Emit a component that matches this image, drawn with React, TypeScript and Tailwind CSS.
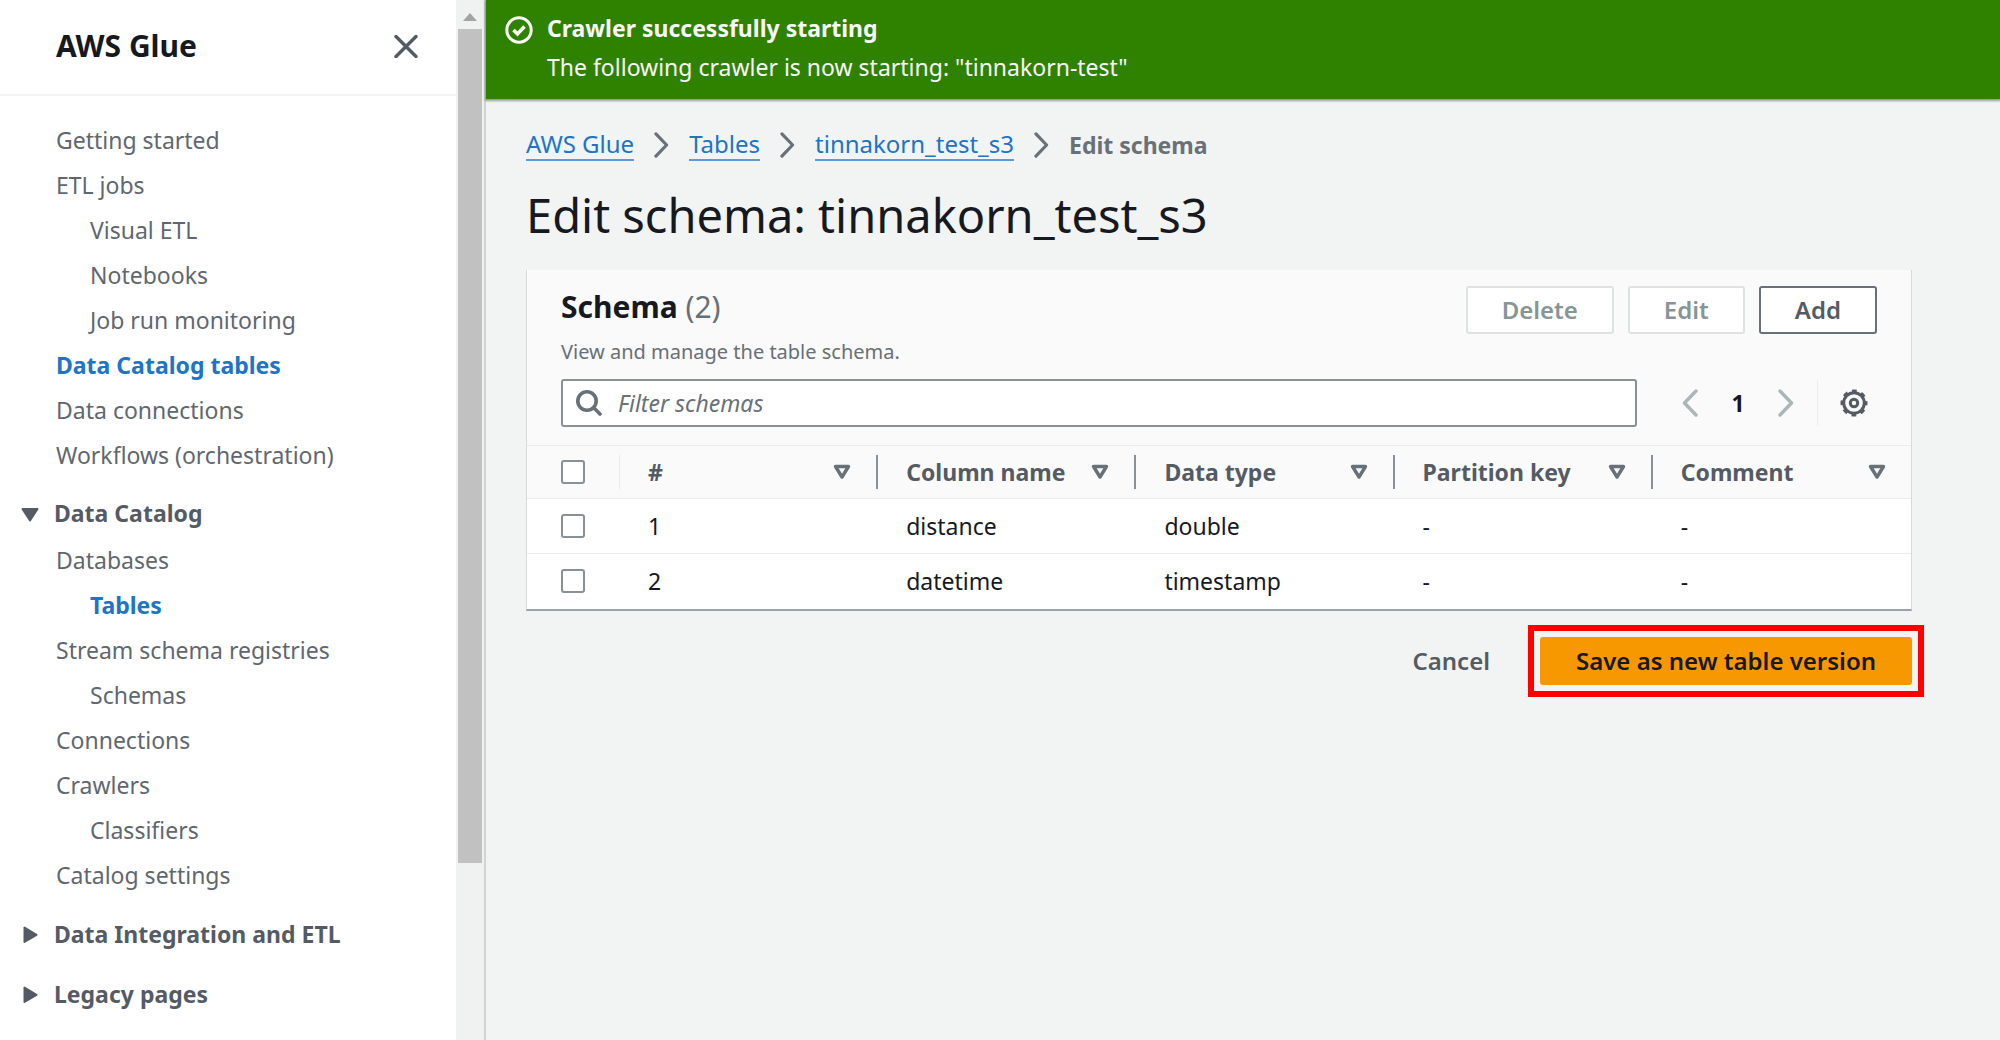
import React, { useState } from 'react';

interface NavItem {
  label: string;
  nested?: boolean;
  active?: boolean;
}

interface SchemaRow {
  id: number;
  name: string;
  type: string;
  partitionKey: string;
  comment: string;
}

const TOP_ITEMS: NavItem[] = [
  { label: 'Getting started' },
  { label: 'ETL jobs' },
  { label: 'Visual ETL', nested: true },
  { label: 'Notebooks', nested: true },
  { label: 'Job run monitoring', nested: true },
  { label: 'Data Catalog tables', active: true },
  { label: 'Data connections' },
  { label: 'Workflows (orchestration)' },
];

const CATALOG_ITEMS: NavItem[] = [
  { label: 'Databases' },
  { label: 'Tables', nested: true, active: true },
  { label: 'Stream schema registries' },
  { label: 'Schemas', nested: true },
  { label: 'Connections' },
  { label: 'Crawlers' },
  { label: 'Classifiers', nested: true },
  { label: 'Catalog settings' },
];

const COLUMNS = ['#', 'Column name', 'Data type', 'Partition key', 'Comment'];

const ROWS: SchemaRow[] = [
  { id: 1, name: 'distance', type: 'double', partitionKey: '-', comment: '-' },
  { id: 2, name: 'datetime', type: 'timestamp', partitionKey: '-', comment: '-' },
];

const CRUMBS = ['AWS Glue', 'Tables', 'tinnakorn_test_s3'];

function NavList({ items }: { items: NavItem[] }) {
  return (
    <ul>
      {items.map((item) => (
        <li key={item.label} className={item.nested ? 'pl-[34px]' : ''}>
          <a
            href="#"
            className={`block leading-[45px] ${item.active ? 'font-bold text-[#2074c5]' : 'text-[#5f6770]'}`}
          >
            {item.label}
          </a>
        </li>
      ))}
    </ul>
  );
}

function NavSection({ label, open }: { label: string; open?: boolean }) {
  return (
    <button type="button" aria-expanded={!!open} className="flex h-[45px] items-center gap-[15px] font-bold text-[#545b64]">
      <svg viewBox="0 0 18 18" className="h-[18px] w-[18px]" fill="currentColor" stroke="currentColor" strokeWidth="2" strokeLinejoin="round">
        {open ? <path d="M1.500 5h15L9 16.500z" /> : <path d="M3.500 2.500v14.500L15.500 9.800z" />}
      </svg>
      {label}
    </button>
  );
}

function Chevron({ left, className }: { left?: boolean; className: string }) {
  return (
    <svg viewBox="0 0 16 28" className={className} fill="none" stroke="currentColor" strokeWidth="3.400" strokeLinecap="round" strokeLinejoin="round">
      <path d={left ? 'M14 2 2.500 14 14 26' : 'M2 2l11.500 12L2 26'} />
    </svg>
  );
}

function GearIcon() {
  return (
    <svg viewBox="0 0 28 28" className="h-7 w-7" fill="none" stroke="currentColor" strokeWidth="3">
      <circle cx="14" cy="14" r="10.300" />
      <circle cx="14" cy="14" r="12" strokeDasharray="4.700 4.725" strokeDashoffset="2.350" />
      <circle cx="14" cy="14" r="3.700" />
    </svg>
  );
}

function Checkbox({ label }: { label: string }) {
  return (
    <input
      type="checkbox"
      aria-label={label}
      className="block h-6 w-6 appearance-none rounded-[3px] border-2 border-[#879196] bg-white checked:bg-[#2074c5]"
    />
  );
}

function SchemaTable() {
  return (
    <table className="w-full table-fixed border-collapse text-left text-[#16191f]">
      <thead className="bg-[#fafafa] text-[#545b64]">
        <tr className="h-[53px] border-y border-[#eaeded]">
          <th className="w-[93px] p-0">
            <div className="flex h-[34px] items-center border-r border-[#eaeded] pl-[34px]">
              <Checkbox label="Select all rows" />
            </div>
          </th>
          {COLUMNS.map((column, index) => (
            <th key={column} className="p-0 font-bold">
              <div
                className={`flex h-[34px] items-center justify-between pr-[25px] pl-7 ${
                  index < COLUMNS.length - 1 ? 'border-r-2 border-[#879196]' : ''
                }`}
              >
                {column}
                <svg viewBox="0 0 18 16" className="h-4 w-[18px] text-[#687078]" fill="none" stroke="currentColor" strokeWidth="3.400" strokeLinejoin="round">
                  <path d="M2.500 2.500h13L9 13z" />
                </svg>
              </div>
            </th>
          ))}
        </tr>
      </thead>
      <tbody>
        {ROWS.map((row) => (
          <tr key={row.id} className="h-[55px] border-b border-[#eaeded] last:border-b-0">
            <td className="p-0 pl-[34px]">
              <Checkbox label={`Select row ${row.id}`} />
            </td>
            <td className="p-0 pl-7">{row.id}</td>
            <td className="p-0 pl-7">{row.name}</td>
            <td className="p-0 pl-7">{row.type}</td>
            <td className="p-0 pl-7">{row.partitionKey}</td>
            <td className="p-0 pl-7">{row.comment}</td>
          </tr>
        ))}
      </tbody>
    </table>
  );
}

export default function App() {
  const [filter, setFilter] = useState('');

  return (
    <div className="flex min-h-screen bg-[#f2f3f3] font-['Noto_Sans',sans-serif] text-[23px] leading-8">
      <aside className="flex w-[486px] shrink-0 border-r-2 border-[#d0d4d6]">
        <div className="flex-1 bg-white">
          <div className="flex h-24 items-center justify-between border-b-2 border-[#f2f3f3] pr-[38px] pb-0.5 pl-14">
            <h2 className="text-[30px] font-bold text-[#16191f]">AWS Glue</h2>
            <button type="button" aria-label="Close navigation" className="text-[#545b64]">
              <svg viewBox="0 0 24 24" className="h-6 w-6" fill="none" stroke="currentColor" strokeWidth="3.400" strokeLinecap="round">
                <path d="M2 2.500l20 20M22 2.500L2 22.500" />
              </svg>
            </button>
          </div>
          <nav className="pt-[22px]">
            <div className="pl-14">
              <NavList items={TOP_ITEMS} />
            </div>
            <div className="pt-3 pl-[21px]">
              <NavSection label="Data Catalog" open />
            </div>
            <div className="pt-[3px] pl-14">
              <NavList items={CATALOG_ITEMS} />
            </div>
            <div className="flex flex-col gap-[15px] pt-[13px] pl-[21px]">
              <NavSection label="Data Integration and ETL" />
              <NavSection label="Legacy pages" />
            </div>
          </nav>
        </div>
        <div className="flex w-7 flex-col items-center bg-[#f0f1f1]">
          <div className="flex h-[29px] items-center pt-1">
            <svg viewBox="0 0 14 8" className="h-2 w-[14px]" fill="#a3a3a3">
              <path d="M7 0l7 8H0z" />
            </svg>
          </div>
          <div className="h-[834px] w-6 bg-[#c1c1c1]" />
        </div>
      </aside>

      <div className="min-w-0 flex-1">
        <div className="flex gap-[14px] bg-[#2f8100] px-[19px] pt-[9px] pb-3 text-[#fafafa] shadow-[0_1px_2px_1px_rgba(0,28,36,0.4)]" role="status">
          <svg viewBox="0 0 28 28" className="mt-[7px] h-7 w-7 shrink-0" fill="none" stroke="currentColor" strokeWidth="3">
            <circle cx="14" cy="14" r="12.200" />
            <path d="M8.500 14l4 4 7-7.500" strokeWidth="3.600" />
          </svg>
          <div className="leading-[39px]">
            <p className="font-bold">Crawler successfully starting</p>
            <p>The following crawler is now starting: "tinnakorn-test"</p>
          </div>
        </div>

        <main className="pt-[30px] pr-[88px] pl-10">
          <nav aria-label="Breadcrumbs" className="flex items-center gap-5 text-[24px] text-[#687078]">
            {CRUMBS.map((crumb) => (
              <React.Fragment key={crumb}>
                <a href="#" className="border-b-2 border-[#5a9bd8] leading-[30px] text-[#2074c5]">{crumb}</a>
                <Chevron className="h-[26px] w-[15px]" />
              </React.Fragment>
            ))}
            <span className="text-[23px] font-bold">Edit schema</span>
          </nav>

          <h1 className="mt-5 text-[47px] leading-[68px] text-[#16191f]">Edit schema: tinnakorn_test_s3</h1>

          <section className="mt-[21px] border-x border-b-2 border-x-[#d5dbdb] border-b-[#9aa3a8] bg-white">
            <div className="bg-[#fafafa] px-[34px] pt-4 pb-[18px]">
              <div className="flex items-start justify-between">
                <div>
                  <h2 className="text-[30px] leading-[42px] font-bold text-[#16191f]">
                    Schema <span className="font-normal text-[#687078]">(2)</span>
                  </h2>
                  <p className="mt-1.5 text-[20px] leading-9 text-[#687078]">View and manage the table schema.</p>
                </div>
                <div className="flex gap-[14px] text-[24px] font-semibold">
                  <button type="button" disabled className="h-12 rounded-[3px] border-2 border-[#dde2e2] bg-white px-[34px] text-[#879596]">Delete</button>
                  <button type="button" disabled className="h-12 rounded-[3px] border-2 border-[#dde2e2] bg-white px-[34px] text-[#879596]">Edit</button>
                  <button type="button" className="h-12 rounded-[3px] border-2 border-[#687078] bg-white px-[34px] text-[#545b64]">Add</button>
                </div>
              </div>

              <div className="mt-[9px] flex items-center">
                <label className="flex h-12 flex-1 items-center gap-4 rounded-[3px] border-2 border-[#879196] bg-white px-[13px]">
                  <svg viewBox="0 0 26 26" className="h-[26px] w-[26px] shrink-0 text-[#687078]" fill="none" stroke="currentColor" strokeWidth="3.600" strokeLinecap="round">
                    <circle cx="11" cy="11" r="9.200" />
                    <path d="M18 18l6 6" />
                  </svg>
                  <input
                    type="search"
                    aria-label="Filter schemas"
                    placeholder="Filter schemas"
                    value={filter}
                    onChange={(e) => setFilter(e.target.value)}
                    className="w-full outline-none placeholder:text-[#687078] placeholder:italic"
                  />
                </label>
                <div className="ml-[45px] flex items-center text-[#aab7b8]">
                  <button type="button" aria-label="Previous page" disabled>
                    <Chevron left className="h-7 w-4" />
                  </button>
                  <button type="button" aria-current="page" className="w-20 font-bold text-[#16191f]">1</button>
                  <button type="button" aria-label="Next page" disabled>
                    <Chevron className="h-7 w-4" />
                  </button>
                </div>
                <div className="ml-[23px] flex h-[46px] items-center border-l border-[#eaeded] pr-[9px] pl-[22px]">
                  <button type="button" aria-label="Preferences" className="text-[#545b64]">
                    <GearIcon />
                  </button>
                </div>
              </div>
            </div>
            <SchemaTable />
          </section>

          <div className="mt-[26px] flex items-center justify-end gap-[50px] text-[24px] font-semibold">
            <button type="button" className="text-[#545b64]">Cancel</button>
            <div className="outline-[6px] outline-offset-[6px] outline-[#ff0000]">
              <button type="button" className="block h-12 rounded-[3px] bg-[#f89800] px-9 text-[#16191f]">
                Save as new table version
              </button>
            </div>
          </div>
        </main>
      </div>
    </div>
  );
}
